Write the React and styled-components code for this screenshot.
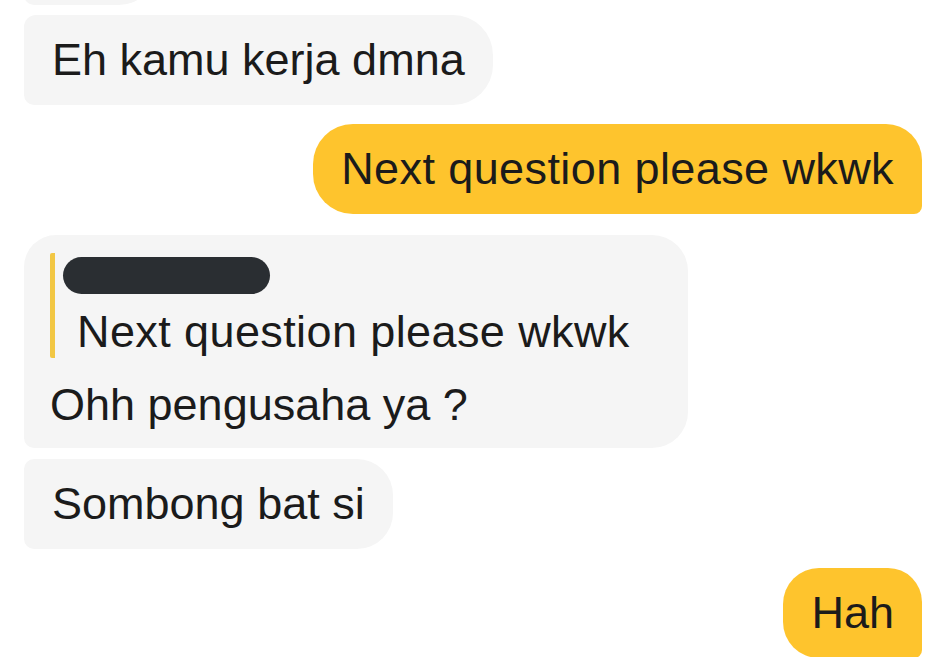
import React from "react";
import styled, { createGlobalStyle } from "styled-components";

const GlobalStyle = createGlobalStyle`
  html, body {
    margin: 0;
    padding: 0;
    background: #ffffff;
    overflow: hidden;
  }
  body {
    font-family: "Liberation Sans", Arial, sans-serif;
  }
`;

const Thread = styled.div`
  display: flex;
  flex-direction: column;
  padding: 0 18px 0 24px;
  height: 657px;
  overflow: hidden;
`;

const Row = styled.div`
  display: flex;
  justify-content: ${(p) => (p.mine ? "flex-end" : "flex-start")};
  margin-top: ${(p) => p.gap}px;
`;

const Bubble = styled.div`
  background: ${(p) => (p.mine ? "#fec42d" : "#f5f5f5")};
  color: #1b1b1b;
  font-size: 45px;
  line-height: 52px;
  letter-spacing: ${(p) => p.spacing || 0}px;
  min-width: ${(p) => p.minWidth || 0}px;
  min-height: 52px;
  padding: ${(p) => (p.quote ? "18px 58px 17px 26px" : "19px 28px 19px 28px")};
  border-radius: ${(p) => p.radius};
  white-space: nowrap;
`;

const QuoteBlock = styled.div`
  border-left: 5px solid #f2c744;
  border-radius: 2px;
  padding-top: 4px;
  margin-bottom: 21px;
`;

const HiddenName = styled.div`
  width: 207px;
  height: 37px;
  margin-left: 8px;
  border-radius: 19px;
  background: #2a2e32;
`;

const QuoteText = styled.div`
  margin-top: 12px;
  padding-left: 22px;
  letter-spacing: 0.4px;
`;

const messages = [
  { id: 1, text: "", gap: -85, minWidth: 75, radius: "10px 36px 36px 10px" },
  { id: 2, text: "Eh kamu kerja dmna", gap: 10, radius: "12px 40px 40px 10px" },
  {
    id: 3,
    text: "Next question please wkwk",
    gap: 19,
    mine: true,
    spacing: 0.4,
    radius: "40px 36px 8px 40px",
  },
  {
    id: 4,
    text: "Ohh pengusaha ya ?",
    gap: 21,
    quote: "Next question please wkwk",
    radius: "32px 36px 36px 10px",
  },
  { id: 5, text: "Sombong bat si", gap: 11, radius: "10px 36px 36px 10px" },
  { id: 6, text: "Hah", gap: 19, mine: true, radius: "36px 34px 8px 36px" },
];

export default function App() {
  return (
    <>
      <GlobalStyle />
      <Thread>
        {messages.map((m) => (
          <Row key={m.id} mine={m.mine} gap={m.gap}>
            <Bubble
              mine={m.mine}
              quote={!!m.quote}
              radius={m.radius}
              minWidth={m.minWidth}
              spacing={m.spacing}
            >
              {m.quote && (
                <QuoteBlock>
                  <HiddenName />
                  <QuoteText>{m.quote}</QuoteText>
                </QuoteBlock>
              )}
              {m.text}
            </Bubble>
          </Row>
        ))}
      </Thread>
    </>
  );
}
